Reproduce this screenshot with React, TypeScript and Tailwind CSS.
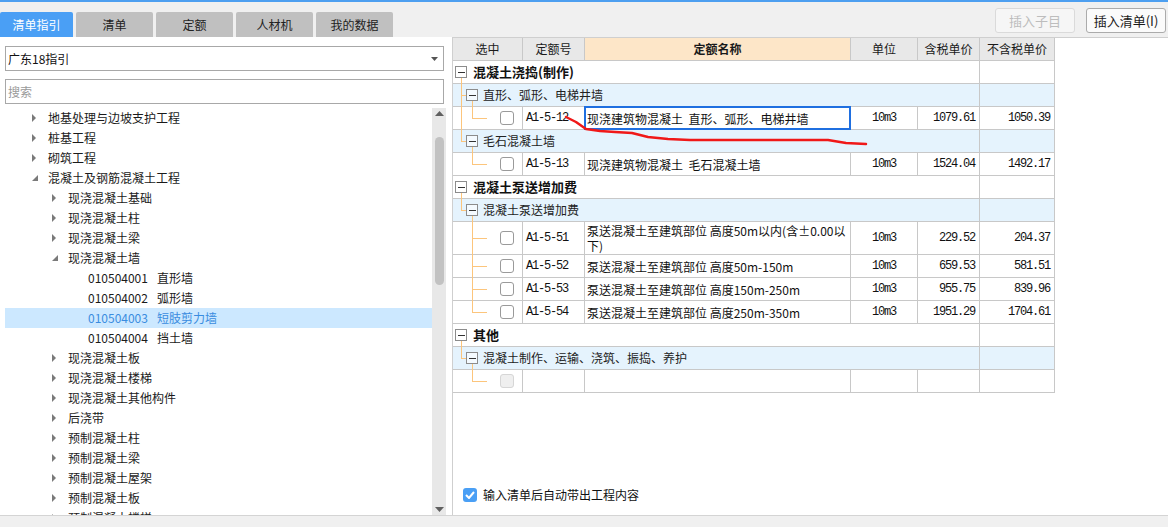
import React from "react";

type TreeItem = {
  level: 1 | 2 | 3;
  label: string;
  code?: string;
  arrow?: "right" | "down";
  selected?: boolean;
};

const TREE: TreeItem[] = [
  { level: 1, label: "地基处理与边坡支护工程", arrow: "right" },
  { level: 1, label: "桩基工程", arrow: "right" },
  { level: 1, label: "砌筑工程", arrow: "right" },
  { level: 1, label: "混凝土及钢筋混凝土工程", arrow: "down" },
  { level: 2, label: "现浇混凝土基础", arrow: "right" },
  { level: 2, label: "现浇混凝土柱", arrow: "right" },
  { level: 2, label: "现浇混凝土梁", arrow: "right" },
  { level: 2, label: "现浇混凝土墙", arrow: "down" },
  { level: 3, code: "010504001", label: "直形墙" },
  { level: 3, code: "010504002", label: "弧形墙" },
  { level: 3, code: "010504003", label: "短肢剪力墙", selected: true },
  { level: 3, code: "010504004", label: "挡土墙" },
  { level: 2, label: "现浇混凝土板", arrow: "right" },
  { level: 2, label: "现浇混凝土楼梯", arrow: "right" },
  { level: 2, label: "现浇混凝土其他构件", arrow: "right" },
  { level: 2, label: "后浇带", arrow: "right" },
  { level: 2, label: "预制混凝土柱", arrow: "right" },
  { level: 2, label: "预制混凝土梁", arrow: "right" },
  { level: 2, label: "预制混凝土屋架", arrow: "right" },
  { level: 2, label: "预制混凝土板", arrow: "right" },
  { level: 2, label: "预制混凝土楼梯", arrow: "right" },
];

const INDENT: Record<number, string> = {
  1: "pl-[27px]",
  2: "pl-[47px]",
  3: "pl-[83px]",
};

type Row =
  | { kind: "group"; label: string }
  | { kind: "sub"; label: string; groupLast: boolean }
  | {
      kind: "item";
      code: string;
      name: React.ReactNode;
      unit: string;
      p1: string;
      p2: string;
      groupThrough: boolean;
      subLast: boolean;
      tall?: boolean;
      selected?: boolean;
      disabled?: boolean;
    };

const ROWS: Row[] = [
  { kind: "group", label: "混凝土浇捣(制作)" },
  { kind: "sub", label: "直形、弧形、电梯井墙", groupLast: false },
  {
    kind: "item",
    code: "A1-5-12",
    name: "现浇建筑物混凝土  直形、弧形、电梯井墙",
    unit: "10m3",
    p1: "1079.61",
    p2: "1050.39",
    groupThrough: true,
    subLast: true,
    selected: true,
  },
  { kind: "sub", label: "毛石混凝土墙", groupLast: true },
  {
    kind: "item",
    code: "A1-5-13",
    name: "现浇建筑物混凝土  毛石混凝土墙",
    unit: "10m3",
    p1: "1524.04",
    p2: "1492.17",
    groupThrough: false,
    subLast: true,
  },
  { kind: "group", label: "混凝土泵送增加费" },
  { kind: "sub", label: "混凝土泵送增加费", groupLast: true },
  {
    kind: "item",
    code: "A1-5-51",
    name: (
      <>
        泵送混凝土至建筑部位 高度50m以内(含±0.00以
        <br />
        下)
      </>
    ),
    unit: "10m3",
    p1: "229.52",
    p2: "204.37",
    groupThrough: false,
    subLast: false,
    tall: true,
  },
  {
    kind: "item",
    code: "A1-5-52",
    name: "泵送混凝土至建筑部位 高度50m-150m",
    unit: "10m3",
    p1: "659.53",
    p2: "581.51",
    groupThrough: false,
    subLast: false,
  },
  {
    kind: "item",
    code: "A1-5-53",
    name: "泵送混凝土至建筑部位 高度150m-250m",
    unit: "10m3",
    p1: "955.75",
    p2: "839.96",
    groupThrough: false,
    subLast: false,
  },
  {
    kind: "item",
    code: "A1-5-54",
    name: "泵送混凝土至建筑部位 高度250m-350m",
    unit: "10m3",
    p1: "1951.29",
    p2: "1704.61",
    groupThrough: false,
    subLast: true,
  },
  { kind: "group", label: "其他" },
  { kind: "sub", label: "混凝土制作、运输、浇筑、振捣、养护", groupLast: true },
  {
    kind: "item",
    code: "",
    name: "",
    unit: "",
    p1: "",
    p2: "",
    groupThrough: false,
    subLast: true,
    disabled: true,
  },
];

const CELL = "border-r border-b border-[#c8c8c8]";
const MONO = "font-['Liberation_Mono',monospace] text-[12px] tracking-[-1.2px] text-[#111]";

function MinusBox({ className }: { className: string }) {
  return (
    <div
      className={`absolute top-1/2 -translate-y-1/2 z-10 w-[12px] h-[12px] border border-[#8c8c8c] flex items-center justify-center ${className}`}
    >
      <div className="w-[7px] h-px bg-[#333]" />
    </div>
  );
}

function TriRight() {
  return (
    <svg width="4" height="8" viewBox="0 0 4 8">
      <path d="M0 0 L4 4 L0 8 Z" fill="#7a7a7a" />
    </svg>
  );
}

function TriDown() {
  return (
    <svg width="6" height="6" viewBox="0 0 6 6">
      <path d="M6 0 L6 6 L0 6 Z" fill="#7a7a7a" />
    </svg>
  );
}

function TableRow({ row }: { row: Row }) {
  if (row.kind === "group") {
    return (
      <>
        <div className={`${CELL} col-span-5 relative h-[23px] flex items-center bg-white`}>
          <MinusBox className="left-[2px] bg-white" />
          <div className="absolute left-[8px] w-px bg-[#fcc57c] top-[calc(50%+6px)] bottom-[-1px]" />
          <span className="pl-[20px] text-[13px] font-bold text-[#111]">{row.label}</span>
        </div>
        <div className={`${CELL} h-[23px] bg-white`} />
      </>
    );
  }
  if (row.kind === "sub") {
    return (
      <>
        <div className={`${CELL} col-span-5 relative h-[23px] flex items-center bg-[#e5f3fd]`}>
          <div
            className={`absolute left-[8px] w-px bg-[#fcc57c] top-0 ${row.groupLast ? "h-1/2" : "bottom-[-1px]"}`}
          />
          <div className="absolute left-[8px] top-1/2 w-[5px] h-px bg-[#fcc57c]" />
          <MinusBox className="left-[13px] bg-[#f4faff]" />
          <div className="absolute left-[19px] w-px bg-[#fcc57c] top-[calc(50%+6px)] bottom-[-1px]" />
          <span className="pl-[30px] text-[12px] text-[#222]">{row.label}</span>
        </div>
        <div className={`${CELL} h-[23px] bg-[#e5f3fd]`} />
      </>
    );
  }
  const h = row.tall ? "h-[33px]" : "h-[23px]";
  return (
    <>
      <div className={`${CELL} ${h} relative bg-white`}>
        {row.groupThrough && <div className="absolute left-[8px] w-px bg-[#fcc57c] top-0 bottom-[-1px]" />}
        <div
          className={`absolute left-[19px] w-px bg-[#fcc57c] top-0 ${row.subLast ? "h-1/2" : "bottom-[-1px]"}`}
        />
        <div className="absolute left-[19px] top-1/2 w-[15px] h-px bg-[#fcc57c]" />
        <div
          className={`absolute left-[47px] top-1/2 -translate-y-1/2 w-[14px] h-[14px] rounded-[3px] border ${
            row.disabled ? "border-[#d6d6d6] bg-[#efefef]" : "border-[#9a9a9a] bg-white"
          }`}
        />
      </div>
      <div className={`${CELL} ${h} flex items-center pl-[3px] ${MONO}`}>{row.code}</div>
      <div className={`${CELL} ${h} relative flex items-center pl-[2px] text-[12px] leading-[15px] text-[#111]`}>
        {row.selected && (
          <div className="absolute -left-px -top-px -right-px -bottom-px border-2 border-[#1f6fe0]" />
        )}
        <span className="whitespace-pre">{row.name}</span>
      </div>
      <div className={`${CELL} ${h} flex items-center justify-center ${MONO}`}>{row.unit}</div>
      <div className={`${CELL} ${h} flex items-center justify-end pr-[4px] ${MONO}`}>{row.p1}</div>
      <div className={`${CELL} ${h} flex items-center justify-end pr-[4px] ${MONO}`}>{row.p2}</div>
    </>
  );
}

export default function App() {
  return (
    <div className="relative w-[1168px] h-[527px] overflow-hidden bg-[#f0f0f0] flex flex-col font-['Noto_Sans_CJK_SC','Microsoft_YaHei',sans-serif] text-[#1a1a1a]">
      <div className="h-[2px] bg-[#4d9ff0]" />

      {/* Top bar: tabs + buttons */}
      <div className="h-[35px] flex justify-between">
        <div className="self-end flex gap-[3px]">
          <div className="w-[73px] h-[25px] flex items-center justify-center bg-[#4a9ff5] text-white text-[12px] rounded-t-[2px]">
            清单指引
          </div>
          {["清单", "定额", "人材机", "我的数据"].map((t) => (
            <div
              key={t}
              className="w-[77px] h-[25px] flex items-center justify-center bg-[#c0c0c0] text-[#222] text-[12px] rounded-t-[2px]"
            >
              {t}
            </div>
          ))}
        </div>
        <div className="flex gap-[11px] mt-[6px] mr-[2px] self-start">
          <div className="w-[80px] h-[25px] flex items-center justify-center border border-[#dadada] bg-[#f6f6f6] rounded-[3px] text-[13px] text-[#bdbdbd]">
            插入子目
          </div>
          <div className="w-[80px] h-[25px] flex items-center justify-center border border-[#ababab] bg-[#fbfbfb] rounded-[3px] text-[13px] text-[#1a1a1a]">
            插入清单(I)
          </div>
        </div>
      </div>

      {/* Main */}
      <div className="flex-1 flex min-h-0">
        {/* Left panel */}
        <div className="w-[452px] bg-white flex flex-col">
          <div className="ml-[5px] mt-[9px] w-[439px] h-[25px] border border-[#a8a8a8] flex items-center justify-between pl-[2px] pr-[5px] text-[12px] text-[#111]">
            <span>广东18指引</span>
            <svg width="7" height="4" viewBox="0 0 7 4">
              <path d="M0 0 L7 0 L3.5 4 Z" fill="#555" />
            </svg>
          </div>
          <div className="ml-[5px] mt-[8px] w-[439px] h-[25px] border border-[#a8a8a8] flex items-center pl-[2px] text-[12px] text-[#9a9a9a]">
            搜索
          </div>
          <div className="mt-[4px] flex-1 min-h-0 flex ml-[5px] mr-[6px]">
            <div className="flex-1 overflow-hidden text-[12px]">
              {TREE.map((it, i) => (
                <div
                  key={i}
                  className={`h-[20px] flex items-center ${INDENT[it.level]} ${
                    it.selected ? "bg-[#cce8ff] text-[#3a8ce0]" : "text-[#1a1a1a]"
                  }`}
                >
                  {it.arrow && (
                    <div className="w-[16px] flex items-center">
                      {it.arrow === "right" ? <TriRight /> : <TriDown />}
                    </div>
                  )}
                  {it.code && <span className="mr-[9px]">{it.code}</span>}
                  <span>{it.label}</span>
                </div>
              ))}
            </div>
            <div className="w-[14px] bg-[#e8e8e8] flex flex-col items-center">
              <svg className="mt-[3px]" width="9" height="5" viewBox="0 0 9 5">
                <path d="M0 5 L4.5 0 L9 5 Z" fill="#606060" />
              </svg>
              <div className="mt-[21px] w-[9px] h-[148px] rounded-full bg-[#c2c2c2]" />
              <div className="flex-1" />
              <svg className="mb-[3px]" width="9" height="5" viewBox="0 0 9 5">
                <path d="M0 0 L9 0 L4.5 5 Z" fill="#606060" />
              </svg>
            </div>
          </div>
        </div>

        {/* Right panel */}
        <div className="flex-1 bg-white border-l border-t border-[#cfcfcf] flex flex-col">
          <div className="grid grid-cols-[70px_62px_266px_67px_62px_75px] w-[602px]">
            <div className={`${CELL} h-[23px] bg-[#e8e8e8] flex items-center justify-center text-[12px]`}>选中</div>
            <div className={`${CELL} h-[23px] bg-[#e8e8e8] flex items-center justify-center text-[12px]`}>定额号</div>
            <div className={`${CELL} h-[23px] bg-[#fde6c8] flex items-center justify-center text-[12px] font-bold`}>
              定额名称
            </div>
            <div className={`${CELL} h-[23px] bg-[#e8e8e8] flex items-center justify-center text-[12px]`}>单位</div>
            <div className={`${CELL} h-[23px] bg-[#e8e8e8] flex items-center justify-center text-[12px]`}>含税单价</div>
            <div className={`${CELL} h-[23px] bg-[#e8e8e8] flex items-center justify-center text-[12px]`}>不含税单价</div>
            {ROWS.map((r, i) => (
              <TableRow key={i} row={r} />
            ))}
          </div>
          <div className="flex-1" />
          <div className="flex items-center pl-[10px] pb-[11px] gap-[6px]">
            <div className="w-[14px] h-[14px] rounded-[3px] bg-[#4a9ff5] flex items-center justify-center">
              <svg width="10" height="8" viewBox="0 0 10 8">
                <path d="M1 4 L4 7 L9 1" stroke="white" strokeWidth="2" fill="none" />
              </svg>
            </div>
            <span className="text-[12px] text-[#111]">输入清单后自动带出工程内容</span>
          </div>
        </div>
      </div>

      {/* Bottom strip */}
      <div className="h-[12px] border-t border-[#d4d4d4] bg-[#f0f0f0]" />

      {/* Red hand annotation */}
      <svg className="absolute inset-0 pointer-events-none" width="1168" height="527">
        <polyline
          points="566,117 576,122 586,129 600,131 615,132 632,133 648,137 668,139 690,140 760,140 828,140 846,143 866,144"
          stroke="#f01818"
          strokeWidth="2.5"
          fill="none"
          strokeLinejoin="round"
          strokeLinecap="round"
        />
      </svg>
    </div>
  );
}
